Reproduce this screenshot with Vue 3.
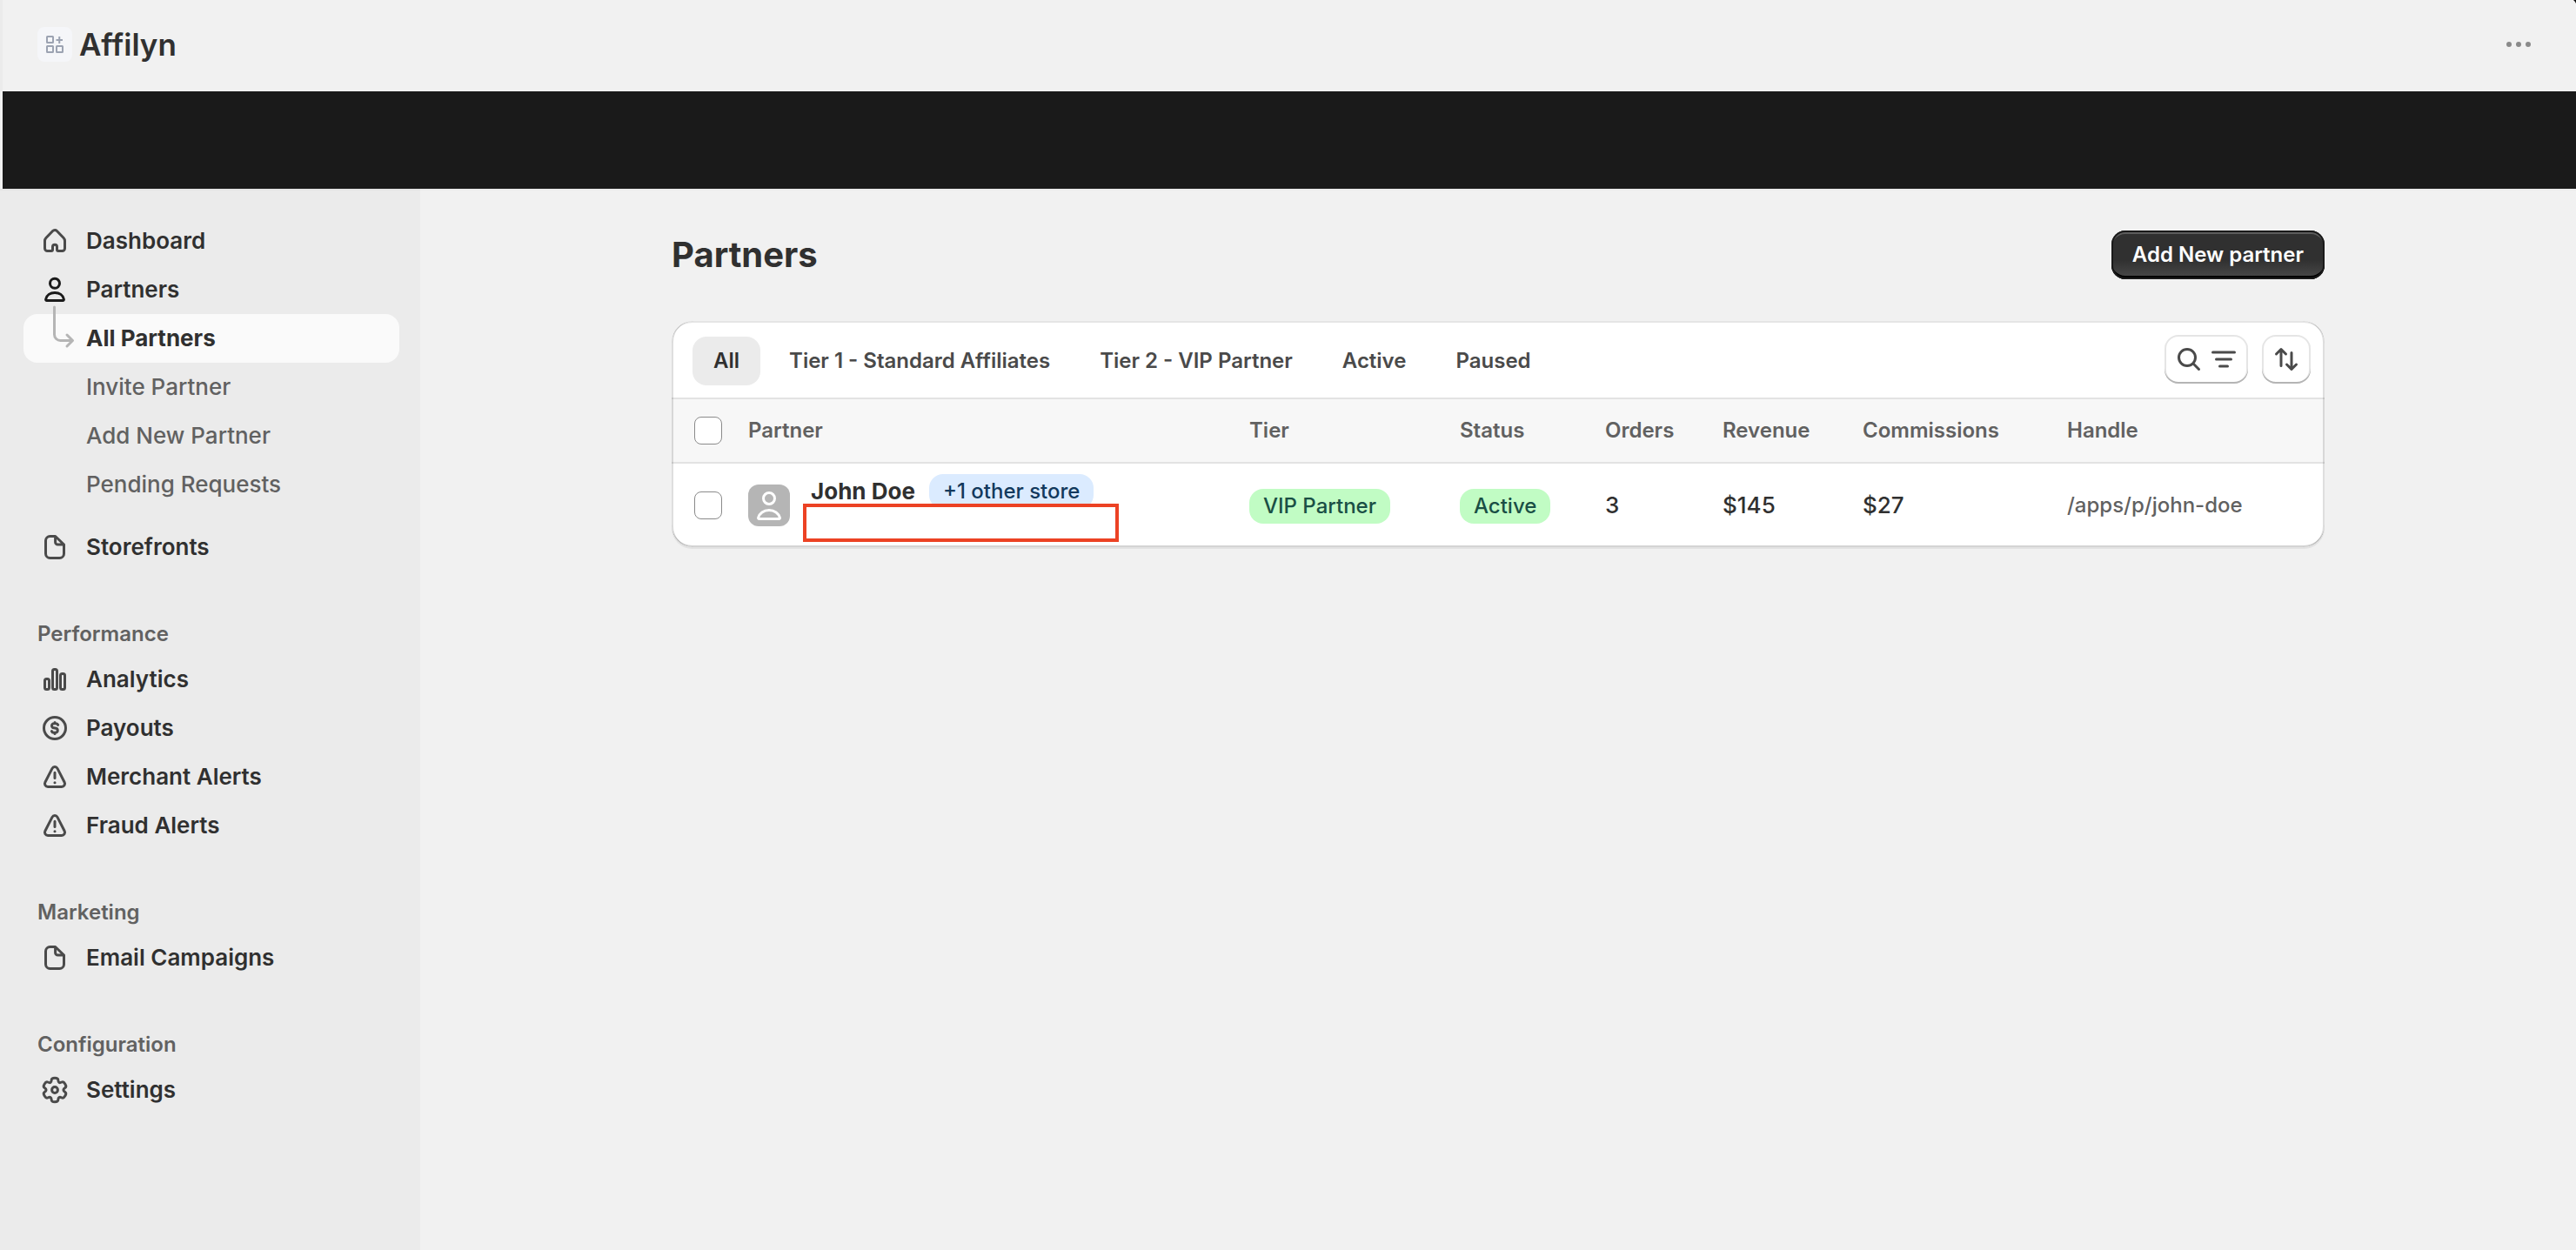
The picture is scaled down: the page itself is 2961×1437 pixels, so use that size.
<script setup>
import { ref } from 'vue'

// Six-toothed gear outline on a 20 x 20 grid
function gearPath() {
  const points = []
  for (let i = 0; i < 6; i++) {
    const base = i * 60 - 90
    for (const [offset, radius] of [[-23, 5], [-15, 7.1], [15, 7.1], [23, 5]]) {
      const angle = ((base + offset) * Math.PI) / 180
      points.push([10 + radius * Math.cos(angle), 10 + radius * Math.sin(angle)])
    }
  }
  const mid = (a, b) => [a[0] * 0.5 + b[0] * 0.5, a[1] * 0.5 + b[1] * 0.5]
  const text = (p) => p.map((n) => n.toFixed(2)).join(' ')
  let path = 'M' + text(mid(points[points.length - 1], points[0]))
  points.forEach((point, i) => {
    path += 'Q' + text(point) + ' ' + text(mid(point, points[(i + 1) % points.length]))
  })
  return path + 'Z'
}

const icons = {
  home: 'M5.75 15.75h2.25a.75.75 0 0 0 .75-.75v-1.65a1.25 1.25 0 0 1 2.5 0v1.65a.75.75 0 0 0 .75.75h2.25a1.5 1.5 0 0 0 1.5-1.5V10a2.5 2.5 0 0 0-.7-1.75L11.2 4.25a1.65 1.65 0 0 0-2.4 0L4.95 8.25a2.5 2.5 0 0 0-.7 1.75v4.25a1.5 1.5 0 0 0 1.5 1.5z',
  person: 'M12.75 6.4a2.75 2.75 0 1 1-5.5 0a2.75 2.75 0 0 1 5.5 0zM4.8 15.5c.5-2.3 2.6-3.75 5.2-3.75s4.7 1.45 5.2 3.75a.6.6 0 0 1-.6.75H5.4a.6.6 0 0 1-.6-.75z',
  file: 'M10.3 3.75H7.25a2.5 2.5 0 0 0-2.5 2.5v7.5a2.5 2.5 0 0 0 2.5 2.5h5.5a2.5 2.5 0 0 0 2.5-2.5V8.5zM10.3 3.75v3.35a1.4 1.4 0 0 0 1.4 1.4h3.55',
  chart: 'M5.25 9.75h.5a1 1 0 0 1 1 1v4a1 1 0 0 1-1 1h-.5a1 1 0 0 1-1-1v-4a1 1 0 0 1 1-1zM9.75 4.25h.5a1 1 0 0 1 1 1v9.5a1 1 0 0 1-1 1h-.5a1 1 0 0 1-1-1v-9.5a1 1 0 0 1 1-1zM14.25 6.75h.5a1 1 0 0 1 1 1v7a1 1 0 0 1-1 1h-.5a1 1 0 0 1-1-1v-7a1 1 0 0 1 1-1z',
  money: 'M16.25 10a6.25 6.25 0 1 1-12.5 0a6.25 6.25 0 0 1 12.5 0zM11.85 8.2c-.2-.5-.65-.8-1.2-.8H9.6a1.25 1.25 0 0 0-.2 2.5l1.3.25a1.25 1.25 0 0 1-.2 2.45H9.4c-.55 0-1-.3-1.2-.8M10 6.75v.6M10 12.7v.6',
  alert: 'M8.5 5.2a1.7 1.7 0 0 1 3 0l4.05 7.9a1.8 1.8 0 0 1-1.6 2.65h-7.9a1.8 1.8 0 0 1-1.6-2.65zM10 7.6v3.2M9.98 13.4h.04',
  gear: gearPath() + 'M11.7 10a1.7 1.7 0 1 1-3.4 0a1.7 1.7 0 0 1 3.4 0z'
}

const sections = [
  {
    items: [
      { label: 'Dashboard', icon: 'home' },
      {
        label: 'Partners',
        icon: 'person',
        open: true,
        children: ['All Partners', 'Invite Partner', 'Add New Partner', 'Pending Requests']
      },
      { label: 'Storefronts', icon: 'file' }
    ]
  },
  {
    title: 'Performance',
    items: [
      { label: 'Analytics', icon: 'chart' },
      { label: 'Payouts', icon: 'money' },
      { label: 'Merchant Alerts', icon: 'alert' },
      { label: 'Fraud Alerts', icon: 'alert' }
    ]
  },
  { title: 'Marketing', items: [{ label: 'Email Campaigns', icon: 'file' }] },
  { title: 'Configuration', items: [{ label: 'Settings', icon: 'gear' }] }
]

const tabs = ['All', 'Tier 1 - Standard Affiliates', 'Tier 2 - VIP Partner', 'Active', 'Paused']
const activeTab = ref('All')
const currentPage = ref('All Partners')

const columns = ['Partner', 'Tier', 'Status', 'Orders', 'Revenue', 'Commissions', 'Handle']
const partners = [
  {
    name: 'John Doe',
    stores: '+1 other store',
    tier: 'VIP Partner',
    status: 'Active',
    orders: '3',
    revenue: '$145',
    commissions: '$27',
    handle: '/apps/p/john-doe'
  }
]
</script>

<template>
  <div class="app">
    <header class="topbar">
      <svg class="app-icon" viewBox="0 0 40 40" aria-hidden="true">
        <rect width="40" height="40" rx="8" fill="#f5f6f9" />
        <g fill="none" stroke="#9ca3b2" stroke-width="2">
          <rect x="11" y="11" width="7" height="7" rx="0.5" />
          <rect x="11" y="22" width="7" height="7" rx="0.5" />
          <rect x="22" y="22" width="7" height="7" rx="0.5" />
          <path d="M21.5 15h7.5M25.25 11v8" />
        </g>
      </svg>
      <span class="app-name">Affilyn</span>
      <button class="more" type="button" aria-label="More actions">
        <svg viewBox="0 0 40 40" fill="#8a8a8a" aria-hidden="true">
          <circle cx="9" cy="20" r="3" />
          <circle cx="20" cy="20" r="3" />
          <circle cx="31" cy="20" r="3" />
        </svg>
      </button>
      <svg class="corner" viewBox="0 0 3 4" aria-hidden="true"><path d="M0 0h3v4Q2 1.5 0 0z" fill="#111" /></svg>
    </header>
    <div class="banner"></div>

    <div class="body">
      <nav class="sidebar" aria-label="Main">
        <section v-for="(section, i) in sections" :key="i">
          <h2 v-if="section.title" class="section-title">{{ section.title }}</h2>
          <ul class="nav-list">
            <li v-for="item in section.items" :key="item.label">
              <a href="#" class="nav-item" :class="{ open: item.open }">
                <svg class="nav-icon" viewBox="0 0 20 20" aria-hidden="true"><path :d="icons[item.icon]" /></svg>
                <span>{{ item.label }}</span>
              </a>
              <ul v-if="item.children" class="nav-list sub-list">
                <li v-for="child in item.children" :key="child">
                  <a href="#" class="sub-item" :class="{ current: child === currentPage }" @click.prevent="currentPage = child">
                    <svg v-if="child === currentPage" class="connector" viewBox="0 0 26 50" aria-hidden="true">
                      <path d="M2.5 2V33.5a7 7 0 0 0 7 7H23M17 34l6.5 6.5L17 47" />
                    </svg>
                    {{ child }}
                  </a>
                </li>
              </ul>
            </li>
          </ul>
        </section>
      </nav>

      <main class="main">
        <div class="page">
          <div class="page-head">
            <h1>Partners</h1>
            <button class="primary" type="button">Add New partner</button>
          </div>

          <div class="card">
            <div class="toolbar">
              <div class="tabs" role="tablist">
                <button
                  v-for="tab in tabs"
                  :key="tab"
                  type="button"
                  role="tab"
                  class="tab"
                  :class="{ selected: tab === activeTab }"
                  :aria-selected="tab === activeTab"
                  @click="activeTab = tab"
                >{{ tab }}</button>
              </div>
              <div class="tools">
                <button class="tool" type="button" aria-label="Search and filter results">
                  <svg viewBox="0 0 20 20" aria-hidden="true"><path d="M13.75 9a4.75 4.75 0 1 1-9.5 0a4.75 4.75 0 0 1 9.5 0zM12.4 12.4l3.35 3.35" /></svg>
                  <svg viewBox="0 0 20 20" aria-hidden="true"><path d="M3.75 6h12.5M5.75 10h8.5M7.75 14h4.5" /></svg>
                </button>
                <button class="tool" type="button" aria-label="Sort the results">
                  <svg viewBox="0 0 20 20" aria-hidden="true"><path d="M7 13.75V4.25M4.25 7L7 4.25L9.75 7M13 6.25v9.5M10.25 13L13 15.75L15.75 13" /></svg>
                </button>
              </div>
            </div>

            <table>
              <colgroup>
                <col class="c-select" /><col class="c-partner" /><col class="c-tier" /><col class="c-status" />
                <col class="c-orders" /><col class="c-revenue" /><col class="c-commissions" /><col />
              </colgroup>
              <thead>
                <tr>
                  <th class="select"><input type="checkbox" aria-label="Select all partners" /></th>
                  <th v-for="column in columns" :key="column" scope="col">{{ column }}</th>
                </tr>
              </thead>
              <tbody>
                <tr v-for="partner in partners" :key="partner.handle">
                  <td class="select"><input type="checkbox" :aria-label="'Select ' + partner.name" /></td>
                  <td>
                    <div class="partner">
                      <svg class="avatar" viewBox="0 0 48 48" aria-hidden="true">
                        <rect width="48" height="48" rx="12" fill="#b5b5b5" />
                        <g fill="none" stroke="#fff" stroke-width="3">
                          <circle cx="24" cy="16" r="6.5" />
                          <path d="M11.6 38.2c1.2-5.2 6.2-8.7 12.4-8.7s11.2 3.5 12.4 8.7q.2 1.3-1 1.3H12.6q-1.2 0-1-1.3z" stroke-linejoin="round" />
                        </g>
                      </svg>
                      <strong class="name">{{ partner.name }}</strong>
                      <span class="badge info">{{ partner.stores }}</span>
                      <span class="redaction"></span>
                    </div>
                  </td>
                  <td><span class="badge">{{ partner.tier }}</span></td>
                  <td><span class="badge">{{ partner.status }}</span></td>
                  <td>{{ partner.orders }}</td>
                  <td>{{ partner.revenue }}</td>
                  <td>{{ partner.commissions }}</td>
                  <td class="handle">{{ partner.handle }}</td>
                </tr>
              </tbody>
            </table>
          </div>
        </div>
      </main>
    </div>
  </div>
</template>

<style>
body {
  margin: 0;
  background: #f1f1f1;
}
</style>

<style scoped>
.app {
  display: flex;
  flex-direction: column;
  min-height: 100vh;
  box-sizing: border-box;
  font-family: Inter, "Liberation Sans", sans-serif;
  font-size: 26px;
  line-height: 40px;
  color: #303030;
}
button {
  font: inherit;
  color: inherit;
  border: 0;
  margin: 0;
  padding: 0;
  background: none;
  cursor: pointer;
}
a {
  color: inherit;
  text-decoration: none;
}
h1, h2 {
  margin: 0;
}
.topbar {
  position: relative;
  display: flex;
  align-items: center;
  height: 105px;
  padding: 0 46px 3px 40px;
  border-left: 3px solid #ebebeb;
  box-sizing: border-box;
}
.app-icon {
  width: 40px;
  height: 40px;
  margin-right: 8px;
}
.app-name {
  font-size: 35px;
  font-weight: 600;
}
.more {
  width: 40px;
  height: 40px;
  margin-left: auto;
}
.more svg {
  display: block;
}
.corner {
  position: absolute;
  top: 0;
  right: 0;
  width: 3px;
  height: 4px;
}
.banner {
  height: 112px;
  margin-left: 3px;
  background: #1a1a1a;
}
.body {
  display: flex;
  flex: 1;
}
.sidebar {
  flex: none;
  width: 483px;
  box-sizing: border-box;
  padding: 30px 24px 30px 27px;
  border-top: 2px solid #e4e4e4;
  background: #ebebeb;
}
.section-title {
  margin: 56px 0 8px 16px;
  font-size: 24px;
  font-weight: 600;
  line-height: 32px;
  color: #616161;
}
.nav-list {
  margin: 0;
  padding: 0;
  list-style: none;
}
.nav-item {
  display: flex;
  align-items: center;
  gap: 16px;
  height: 56px;
  padding-left: 16px;
  font-weight: 600;
}
.nav-icon {
  width: 40px;
  height: 40px;
  fill: none;
  stroke: #4a4a4a;
  stroke-width: 1.5;
  stroke-linecap: round;
  stroke-linejoin: round;
}
.open .nav-icon {
  stroke: #1a1a1a;
}
.sub-list {
  margin-bottom: 16px;
}
.sub-item {
  position: relative;
  display: flex;
  align-items: center;
  height: 56px;
  padding-left: 72px;
  border-radius: 16px;
  font-weight: 450;
  color: #616161;
}
.sub-item.current {
  background: #fafafa;
  color: #303030;
  font-weight: 650;
}
.connector {
  position: absolute;
  left: 33px;
  top: -10px;
  width: 26px;
  height: 50px;
  fill: none;
  stroke: #b5b5b5;
  stroke-width: 3;
  stroke-linecap: round;
  stroke-linejoin: round;
}
.main {
  flex: 1;
  min-width: 0;
  border-top: 2px solid #ebebeb;
}
.page {
  max-width: 1900px;
  margin: 0 auto;
  padding: 46px 48px;
}
.page-head {
  display: flex;
  align-items: center;
  justify-content: space-between;
  margin-bottom: 48px;
}
h1 {
  font-size: 40px;
  line-height: 48px;
  font-weight: 650;
}
.primary {
  height: 56px;
  padding: 0 24px;
  border-radius: 16px;
  background: linear-gradient(180deg, #303030 60%, #4a4a4a 100%);
  box-shadow: inset 0 0 0 2px #1a1a1a, inset 0 -4px 0 0 #000, inset 0 4px 0 0 #5c5c5c;
  color: #fff;
  font-size: 24px;
  font-weight: 600;
}
.card {
  position: relative;
  border-radius: 24px;
  overflow: hidden;
  background: #fff;
  box-shadow: 0 2px 0 0 rgba(26, 26, 26, 0.07);
}
.card::after {
  content: "";
  position: absolute;
  inset: 0;
  border-radius: 24px;
  pointer-events: none;
  box-shadow: inset 2px 0 0 0 rgba(0, 0, 0, 0.13), inset -2px 0 0 0 rgba(0, 0, 0, 0.13),
    inset 0 -2px 0 0 rgba(0, 0, 0, 0.17), inset 0 2px 0 0 rgba(204, 204, 204, 0.5);
}
.toolbar {
  display: flex;
  justify-content: space-between;
  align-items: flex-start;
  height: 90px;
  box-sizing: border-box;
  padding: 16px 16px 0 24px;
  border-bottom: 2px solid #e3e3e3;
}
.tabs {
  display: flex;
  gap: 9px;
  padding-top: 2px;
}
.tab {
  height: 56px;
  padding: 0 24px;
  border-radius: 16px;
  font-size: 24px;
  font-weight: 600;
  color: #4a4a4a;
}
.tab.selected {
  background: #ebebeb;
  color: #303030;
}
.tools {
  display: flex;
  gap: 16px;
}
.tool {
  display: flex;
  padding: 8px;
  border-radius: 16px;
  background: #fff;
  box-shadow: inset 0 -2px 0 0 #b5b5b5, inset 0 0 0 2px rgba(0, 0, 0, 0.1);
}
.tool svg {
  width: 40px;
  height: 40px;
  fill: none;
  stroke: #4a4a4a;
  stroke-width: 1.5;
  stroke-linecap: round;
  stroke-linejoin: round;
}
table {
  width: 100%;
  table-layout: fixed;
  border-collapse: separate;
  border-spacing: 0;
}
.c-select { width: 76px; }
.c-partner { width: 576px; }
.c-tier { width: 242px; }
.c-status { width: 167px; }
.c-orders { width: 135px; }
.c-revenue { width: 161px; }
.c-commissions { width: 235px; }
th, td {
  padding: 0 12px;
  text-align: left;
  white-space: nowrap;
}
th {
  height: 72px;
  border-bottom: 2px solid #e3e3e3;
  background: #f7f7f7;
  font-size: 24px;
  font-weight: 600;
  color: #616161;
}
td {
  height: 96px;
  font-weight: 450;
}
.select {
  padding: 0 0 0 26px;
}
input {
  display: block;
  appearance: none;
  width: 32px;
  height: 32px;
  margin: 0;
  border: 1px solid #8a8a8a;
  border-radius: 8px;
  background: #fff;
}
.partner {
  position: relative;
  display: flex;
  align-items: center;
}
.avatar {
  width: 48px;
  height: 48px;
  margin-right: 24px;
}
.name,
.info {
  margin-bottom: 32px;
}
.name {
  margin-right: 16px;
  font-weight: 650;
}
.badge {
  display: inline-block;
  padding: 0 16px;
  border-radius: 16px;
  background: #c1fcc4;
  color: #1a4f45;
  font-size: 24px;
  font-weight: 450;
  vertical-align: middle;
}
.info {
  background: #dbebff;
  color: #12395d;
}
.redaction {
  position: absolute;
  top: 34px;
  left: 63px;
  width: 363px;
  height: 44px;
  box-sizing: border-box;
  border: 4px solid #ec4224;
  background: #fff;
}
.handle {
  font-size: 24px;
  color: #616161;
}
</style>
